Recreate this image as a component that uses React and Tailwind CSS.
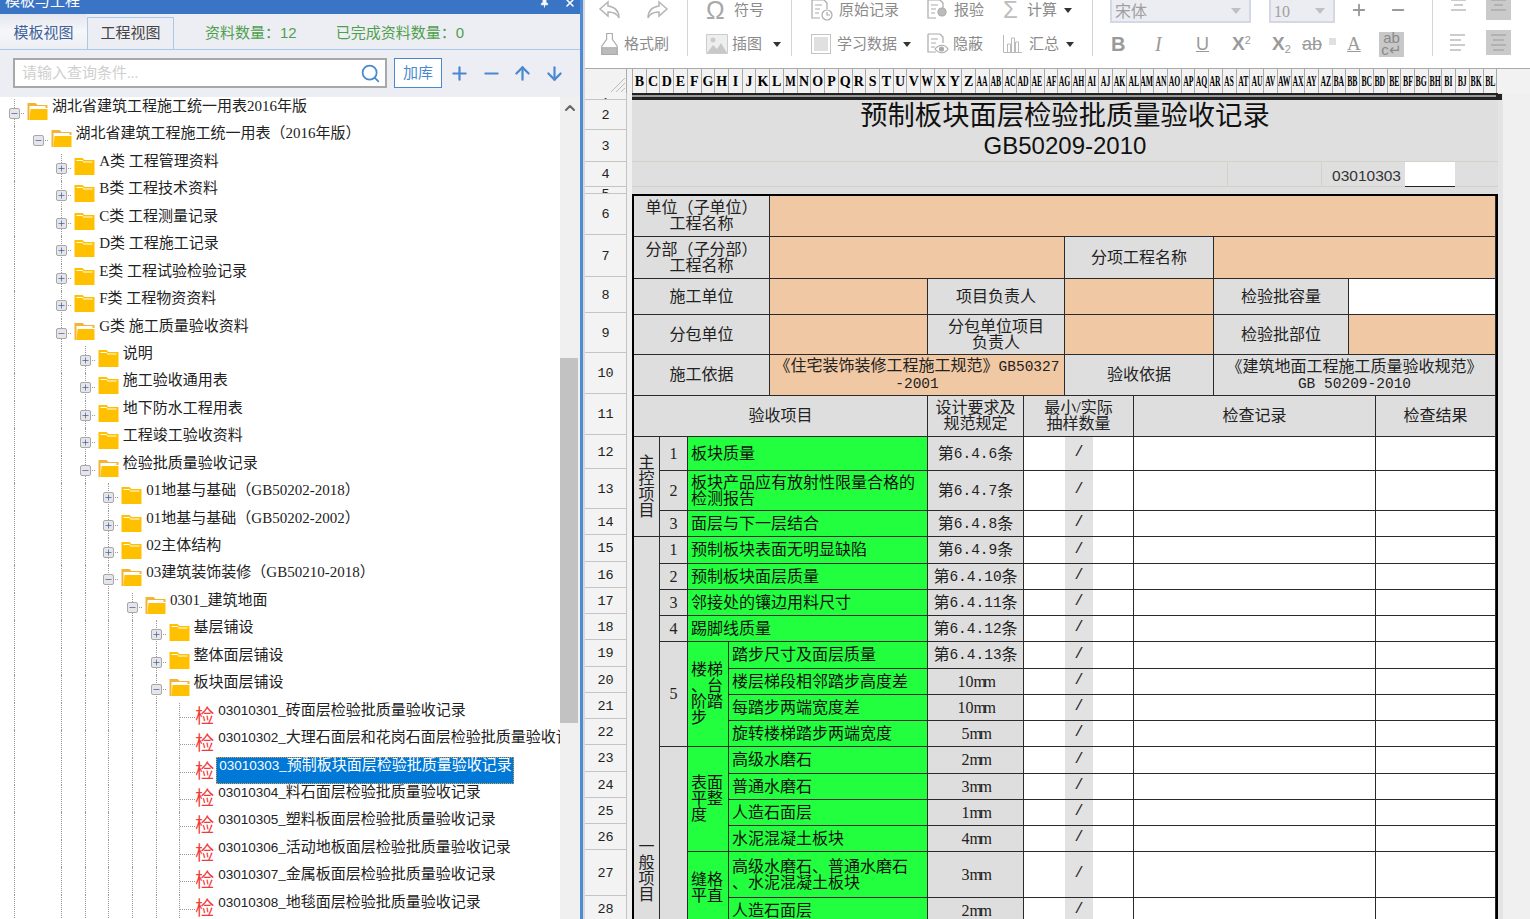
import { ArrowDown, ArrowUp, ChevronUp, Minus, Pin, Plus, Search, X } from "lucide-react";

const tree = [
  { level: 0, label: "湖北省建筑工程施工统一用表2016年版", open: true },
  { level: 1, label: "湖北省建筑工程施工统一用表（2016年版）", open: true },
  { level: 2, label: "A类 工程管理资料" },
  { level: 2, label: "B类 工程技术资料" },
  { level: 2, label: "C类 工程测量记录" },
  { level: 2, label: "D类 工程施工记录" },
  { level: 2, label: "E类 工程试验检验记录" },
  { level: 2, label: "F类 工程物资资料" },
  { level: 2, label: "G类 施工质量验收资料", open: true },
  { level: 3, label: "说明" },
  { level: 3, label: "施工验收通用表" },
  { level: 3, label: "地下防水工程用表" },
  { level: 3, label: "工程竣工验收资料" },
  { level: 3, label: "检验批质量验收记录", open: true },
  { level: 4, label: "01地基与基础（GB50202-2018）" },
  { level: 4, label: "01地基与基础（GB50202-2002）" },
  { level: 4, label: "02主体结构" },
  { level: 4, label: "03建筑装饰装修（GB50210-2018）", open: true },
  { level: 5, label: "0301_建筑地面", open: true },
  { level: 6, label: "基层铺设" },
  { level: 6, label: "整体面层铺设" },
  { level: 6, label: "板块面层铺设", open: true },
  { level: 7, leaf: true, code: "03010301", label: "_砖面层检验批质量验收记录" },
  { level: 7, leaf: true, code: "03010302", label: "_大理石面层和花岗石面层检验批质量验收记录" },
  { level: 7, leaf: true, code: "03010303", label: "_预制板块面层检验批质量验收记录", selected: true },
  { level: 7, leaf: true, code: "03010304", label: "_料石面层检验批质量验收记录" },
  { level: 7, leaf: true, code: "03010305", label: "_塑料板面层检验批质量验收记录" },
  { level: 7, leaf: true, code: "03010306", label: "_活动地板面层检验批质量验收记录" },
  { level: 7, leaf: true, code: "03010307", label: "_金属板面层检验批质量验收记录" },
  { level: 7, leaf: true, code: "03010308", label: "_地毯面层检验批质量验收记录" },
];

const singleCols = "BCDEFGHIJKLMNOPQRSTUVWXYZ".split("");
const doubleCols = [];
"ABCDEFGHIJKLMNOPQRSTUVWXYZ".split("").forEach((c) => doubleCols.push("A" + c));
"ABCDEFGHIJKL".split("").forEach((c) => doubleCols.push("B" + c));

function Folder({ open }) {
  if (open) {
    return (
      <svg width="21" height="18" viewBox="0 0 20 18" className="flex-none">
        <path fill="#f5b335" d="M0 1h8l2 2h10v3H2v12H0z" />
        <path fill="#fff" d="M2 4h16v2H2z" />
        <path fill="#ffc000" d="M3 7h17v11H2z" />
      </svg>
    );
  }
  return (
    <svg width="21" height="18" viewBox="0 0 20 18" className="flex-none">
      <path fill="#ffc000" d="M0 1h8l2 2h10v15H0z" />
      <path fill="#fff" d="M2 3h6l1 1.500h9v1H9L8 4H2z" />
    </svg>
  );
}

function Guide() {
  return (
    <span className="w-[23.6px] h-full flex-none pl-[14px]">
      <span className="block h-full border-l border-dotted border-[#9a9a9a]" />
    </span>
  );
}

function TreeRow({ row }) {
  const guides = [];
  for (let i = 0; i < row.level; i++) {
    if (i === 1) guides.push(<span key={i} className="w-[23.6px] flex-none" />);
    else guides.push(<Guide key={i} />);
  }

  if (row.leaf) {
    return (
      <div className="flex h-[27.45px] items-start whitespace-nowrap">
        {guides}
        <span className="relative w-[30px] h-full flex-none">
          <span className="absolute left-[14px] top-0 h-full border-l border-dotted border-[#9a9a9a]" />
          <span className="absolute left-[15px] top-[14px] w-[15px] border-t border-dotted border-[#9a9a9a]" />
        </span>
        <span className="w-[20px] flex-none mt-[3px] text-[19px] leading-[22px] text-[#f23a3a]">检</span>
        {row.selected ? (
          <span className="ml-[1px] pl-[2px] w-[298px] h-[27px] -mt-[1px] border border-dotted border-[#e8a030] bg-[#0078d7] text-white leading-[15px]">
            <span className="text-[13.500px] font-['Liberation_Sans']">{row.code}</span>
            {row.label}
          </span>
        ) : (
          <span className="ml-[3px] leading-[15px] text-[#222]">
            <span className="text-[13.500px] font-['Liberation_Sans']">{row.code}</span>
            {row.label}
          </span>
        )}
      </div>
    );
  }

  return (
    <div className="flex h-[27.45px] items-start whitespace-nowrap">
      {guides}
      <span className="relative w-[23.6px] h-full flex-none">
        {row.level !== 1 && (
          <span className="absolute left-[14px] top-0 h-full border-l border-dotted border-[#9a9a9a]" />
        )}
        <span className="absolute left-[15px] top-[14px] w-[9px] border-t border-dotted border-[#9a9a9a]" />
        <span className="absolute left-[9px] top-[9px] w-[11px] h-[11px] flex items-center justify-center rounded-[2px] border border-[#a8a8a8] bg-[#e6e6ea]">
          {row.open ? (
            <Minus size={9} strokeWidth={2} className="text-[#44609a]" />
          ) : (
            <Plus size={9} strokeWidth={2} className="text-[#44609a]" />
          )}
        </span>
      </span>
      <span className="ml-[3.4px] mt-[3px] flex-none">
        <Folder open={row.open} />
      </span>
      <span className="ml-[4px] leading-[15px] text-[#222]">{row.label}</span>
    </div>
  );
}

function LeftPanel() {
  return (
    <div className="w-[585px] h-full flex-none flex flex-col border-r-2 border-[#d8d8d8]">
      <div className="w-[583px] h-full flex flex-col border-r-[3px] border-[#4f8ad6] bg-[#edeef3]">
        <div className="h-[14px] flex-none flex items-start justify-between overflow-hidden bg-[#3a74c4] pl-[5px] pr-[4px] text-white">
          <span className="text-[15px] leading-[15px] -mt-[6px]">模板与工程</span>
          <span className="flex items-start gap-[14px] -mt-[3px]">
            <Pin size={11} fill="white" />
            <X size={12} strokeWidth={3} />
          </span>
        </div>

        <div className="h-[36px] flex-none flex items-stretch border-b border-[#a9c8ea]">
          <div className="w-[87px] pt-[3px] flex items-center justify-center bg-gradient-to-b from-[#e4e6ee] via-[#f6f7fa] to-[#edeef3] text-[15px] text-[#3f6299]">
            模板视图
          </div>
          <div className="w-[87px] mt-[3px] flex items-center justify-center border-x border-t border-[#a9c8ea] text-[15px] text-[#444]">
            工程视图
          </div>
          <div className="ml-[31px] pt-[4px] flex items-center text-[15px] text-[#4f9f4f]">
            资料数量：<span className="font-['Liberation_Sans']">12</span>
          </div>
          <div className="ml-[39px] pt-[4px] flex items-center text-[15px] text-[#4f9f4f]">
            已完成资料数量：<span className="font-['Liberation_Sans']">0</span>
          </div>
        </div>

        <div className="h-[47px] flex-none flex items-center pl-[13px] pb-[1px]">
          <div className="w-[374px] h-[30px] flex items-center justify-between border-2 border-[#a8a8a8] bg-white pl-[7px] pr-[4px]">
            <span className="text-[15px] text-[#cfcfcf]">请输入查询条件...</span>
            <Search size={21} strokeWidth={2} className="text-[#4a88d0]" />
          </div>
          <div className="ml-[7px] w-[48px] h-[30px] flex items-center justify-center border border-[#4a88d0] bg-white text-[15px] text-[#4a88d0]">
            加库
          </div>
          <div className="ml-[7px] flex items-center gap-[10.6px] text-[#4a88d0]">
            <Plus size={21} strokeWidth={2.500} />
            <Minus size={21} strokeWidth={2.500} />
            <ArrowUp size={21} strokeWidth={2.500} />
            <ArrowDown size={21} strokeWidth={2.500} />
          </div>
        </div>

        <div className="flex-1 min-h-0 flex">
          <div className="w-[560px] pt-[2px] overflow-hidden bg-white text-[15px]">
            {tree.map((row, i) => (
              <TreeRow key={i} row={row} />
            ))}
          </div>
          <div className="flex-1 bg-[#f0f0f0]">
            <div className="h-[22px] flex items-center justify-center">
              <ChevronUp size={16} strokeWidth={3} className="text-[#666]" />
            </div>
            <div className="mt-[239px] w-[18px] h-[365px] bg-[#c2c2c2]" />
          </div>
        </div>
      </div>
    </div>
  );
}

function Caret() {
  return (
    <svg width="8" height="5" viewBox="0 0 8 5" className="flex-none">
      <path d="M0 0h8L4 5z" fill="#333" />
    </svg>
  );
}

function Arrow({ flip }) {
  return (
    <svg width="24" height="20" viewBox="0 0 24 20" fill="none" stroke="#b5b5b5" strokeWidth="1.500" className={flip ? "-scale-x-100 flex-none" : "flex-none"}>
      <path d="M10 2L2 9l8 7v-4c5 0 9 1 11 6 0-8-4-11-11-12z" />
    </svg>
  );
}

function DocIcon({ badge }) {
  return (
    <svg width="22" height="22" viewBox="0 0 22 22" fill="none" stroke="#aaa" strokeWidth="1.200" className="flex-none">
      <path d="M1 1h12l3 3v6M1 1v18h8" />
      <path d="M4 6h7M4 10h5M4 14h4" />
      {badge === "clock" && (
        <g>
          <circle cx="16" cy="16" r="5" />
          <path d="M16 13v3h3" />
        </g>
      )}
      {badge === "gear" && <circle cx="15" cy="13" r="4" fill="#bbb" />}
      {badge === "eye" && (
        <g>
          <path d="M8 16c4-5 10-5 13 0-3 5-9 5-13 0z" />
          <circle cx="14.500" cy="16" r="2" fill="#aaa" />
        </g>
      )}
    </svg>
  );
}

function ToolLabel({ children }) {
  return <span className="text-[15px] leading-[15px] whitespace-nowrap text-[#8b8b8b]">{children}</span>;
}

function Lines({ align, on }) {
  const d =
    align === "left"
      ? "M1 1h15M1 6h11M1 11h15M1 16h11"
      : align === "top"
        ? "M2 1h15M5 6h9M2 11h15"
        : "M2 1h15M4 6h11M2 11h15M4 16h11";
  return (
    <span className={on ? "w-[25px] h-[25px] flex-none flex items-center justify-center bg-[#cacaca]" : "w-[25px] h-[25px] flex-none flex items-center justify-center"}>
      <svg width="19" height="17" viewBox="0 0 19 17" stroke="#999" strokeWidth="1.200">
        <path d={d} />
      </svg>
    </span>
  );
}

function SelectBox({ className, children }) {
  return (
    <div className={"h-[23px] self-start flex items-center justify-between border-2 border-t-0 border-[#d5d7e6] bg-[#ecedf2] pl-[3px] pr-[8px] text-[16px] text-[#a0a0a0] " + className}>
      <span className="pt-[3px]">{children}</span>
      <svg width="10" height="6" viewBox="0 0 10 6">
        <path d="M0 0h10L5 6z" fill="#c0c0c0" />
      </svg>
    </div>
  );
}

function Toolbar() {
  return (
    <div className="h-[69px] flex-none flex overflow-hidden border-b border-[#aaa] bg-white pl-[13px]">
      <div className="w-[89px] flex-none flex flex-col">
        <div className="h-[20px] flex-none flex items-center gap-[23px] text-[#aaa]">
          <Arrow />
          <Arrow flip />
        </div>
        <div className="h-[48px] flex-none flex items-center gap-[5px] pl-[2px]">
          <svg width="19" height="24" viewBox="0 0 20 24" fill="none" stroke="#aaa" strokeWidth="1.200" className="flex-none">
            <path d="M7 1h6v6l5 7v9H2v-9l5-7z" />
            <path d="M2 16h16v7H2z" fill="#bbb" />
          </svg>
          <ToolLabel>格式刷</ToolLabel>
        </div>
      </div>

      <div className="w-[104px] h-[56px] flex-none flex flex-col border-l border-[#d5d5d5] pl-[18px]">
        <div className="h-[20px] flex-none flex items-center gap-[6px]">
          <span className="w-[22px] text-[25px] leading-[24px] text-[#a8a8a8] font-['Liberation_Sans']">Ω</span>
          <ToolLabel>符号</ToolLabel>
        </div>
        <div className="h-[48px] flex-none flex items-center gap-[4px]">
          <svg width="22" height="20" viewBox="0 0 22 20" className="flex-none">
            <path fill="#eee" stroke="#ccc" d="M.5.500h21v19H.5z" />
            <circle cx="7" cy="6" r="2.500" fill="#ccc" />
            <path fill="#c8c8c8" d="M1 19l6-8 4 4 4-6 6 10z" />
          </svg>
          <ToolLabel>插图</ToolLabel>
          <span className="ml-[7px]">
            <Caret />
          </span>
        </div>
      </div>

      <div className="w-[301px] h-[56px] flex-none grid grid-cols-[116px_76px_1fr] grid-rows-[20px_48px] border-l border-[#d5d5d5] pl-[19px]">
        <div className="flex items-center gap-[6px]">
          <DocIcon badge="clock" />
          <ToolLabel>原始记录</ToolLabel>
        </div>
        <div className="flex items-center gap-[5px]">
          <DocIcon badge="gear" />
          <ToolLabel>报验</ToolLabel>
        </div>
        <div className="flex items-center">
          <span className="w-[24px] text-[24px] leading-[20px] text-[#bdbdbd] font-['Liberation_Sans']">Σ</span>
          <ToolLabel>计算</ToolLabel>
          <span className="ml-[7px]">
            <Caret />
          </span>
        </div>
        <div className="flex items-center gap-[6px]">
          <span className="w-[20px] h-[20px] flex-none flex items-center justify-center border border-[#c4c4c4]">
            <span className="w-[14px] h-[14px] bg-[#e0e0e0]" />
          </span>
          <ToolLabel>学习数据</ToolLabel>
          <span className="ml-0">
            <Caret />
          </span>
        </div>
        <div className="flex items-center gap-[4px]">
          <DocIcon badge="eye" />
          <ToolLabel>隐蔽</ToolLabel>
        </div>
        <div className="flex items-center gap-[7px]">
          <svg width="19" height="18" viewBox="0 0 19 18" fill="none" stroke="#bbb" className="flex-none">
            <path d="M.5 0v17.500H19M4.500 17V9h3v8M8.500 17V3h3v14M12.500 17V7h3v10" />
          </svg>
          <ToolLabel>汇总</ToolLabel>
          <span className="ml-0">
            <Caret />
          </span>
        </div>
      </div>

      <div className="w-[340px] h-[56px] flex-none flex flex-col border-l border-[#d5d5d5] pl-[17px]">
        <div className="h-[20px] flex-none flex items-center">
          <SelectBox className="w-[141px]">宋体</SelectBox>
          <SelectBox className="ml-[18px] w-[66px]">10</SelectBox>
          <Plus size={18} strokeWidth={2.500} className="ml-[15px] text-[#9a9a9a]" />
          <Minus size={18} strokeWidth={2.500} className="ml-[21px] text-[#9a9a9a]" />
        </div>
        <div className="h-[48px] flex-none flex items-center text-[#9a9a9a] font-['Liberation_Sans']">
          <span className="w-[40px] pl-[1px] text-[20px] font-bold">B</span>
          <span className="w-[42px] pl-[5px] text-[20px] italic font-['Liberation_Serif']">I</span>
          <span className="w-[40px] pl-[4px] text-[18px] underline">U</span>
          <span className="w-[40px] text-[19px] font-bold">
            X<sup className="text-[11px] font-normal">2</sup>
          </span>
          <span className="w-[30px] text-[19px] font-bold">
            X<sub className="text-[11px] font-normal">2</sub>
          </span>
          <span className="w-[27px] text-[18px] line-through">ab</span>
          <span className="w-[7px] h-[7px] mb-[6px] flex-none bg-[#e0e0e0]" />
          <span className="ml-[11px] w-[32px] text-[19px] underline font-['Liberation_Serif']">A</span>
          <span className="w-[25px] h-[25px] flex-none overflow-hidden bg-[#c8c8c8] text-[15px] leading-[12px] text-center text-[#8a8a8a]">
            ab
            <br />
            c↵
          </span>
        </div>
      </div>

      <div className="flex-1 h-[56px] flex flex-col border-l border-[#d5d5d5] pl-[13px]">
        <div className="h-[20px] flex-none flex items-center gap-[15px] -mt-[3px]">
          <Lines align="top" />
          <Lines align="top" on />
          <Lines align="top" />
        </div>
        <div className="h-[48px] flex-none flex items-center gap-[15px] pt-[3px]">
          <Lines align="left" />
          <Lines align="center" on />
          <Lines align="left" />
        </div>
      </div>
    </div>
  );
}

function ColumnHeader() {
  return (
    <div className="h-[24px] flex-none flex bg-[#f2f2f2]">
      <div className="w-[42px] flex-none flex items-end justify-end border-r border-[#aaa] pr-[1px] pb-[1px]">
        <svg width="14" height="14" viewBox="0 0 14 14" stroke="#bbb" fill="none">
          <path d="M0 14L14 0M5 14l9-9M10 14l4-4" />
        </svg>
      </div>
      <div className="w-[6px] flex-none border-r border-[#aaa]" />
      <div className="w-[864px] flex-none flex font-['Liberation_Serif'] font-bold text-[14px] text-black">
        {singleCols.map((c) => (
          <div key={c} className="flex-1 min-w-0 flex items-center justify-center overflow-hidden border-r border-[#aaa]">
            <span className={c === "M" || c === "W" ? "scale-x-[.8]" : ""}>{c}</span>
          </div>
        ))}
        {doubleCols.map((c) => (
          <div key={c} className="flex-1 min-w-0 flex items-center justify-center overflow-hidden border-r border-[#aaa]">
            <span className="whitespace-nowrap scale-x-[.55]">{c}</span>
          </div>
        ))}
      </div>
    </div>
  );
}

const rowLabels = [".", 2, 3, 4, 5, 6, 7, 8, 9, 10, 11, 12, 13, 14, 15, 16, 17, 18, 19, 20, 21, 22, 23, 24, 25, 26, 27, 28];

function RowHeader() {
  return (
    <div className="w-[42px] flex-none grid grid-rows-[7px_30px_32px_25px_7px_41px_42px_36px_40px_41px_41px_34px_40px_26px_27px_26px_26px_26px_27px_26px_26px_26px_27px_26px_26px_26px_46px_26px] bg-[#f3f3f3] font-['Liberation_Mono'] text-[13.500px] text-[#222]">
      {rowLabels.map((label, i) => (
        <div
          key={i}
          className={
            i === 4
              ? "flex items-start justify-center overflow-hidden border-r border-b border-[#c4c4c4] leading-none pt-[1px]"
              : "flex items-center justify-center overflow-hidden border-r border-b border-[#c4c4c4] leading-none pt-[2px]"
          }
        >
          {label}
        </div>
      ))}
    </div>
  );
}

function Cell({ className, children }) {
  return (
    <div className={"flex items-center justify-center overflow-hidden border-r border-b border-[#2a2a2a] text-center leading-4 whitespace-nowrap " + className}>
      {children}
    </div>
  );
}

function Mono({ children }) {
  return <span className="font-['Liberation_Mono'] text-[14.500px]">{children}</span>;
}

function Mm({ n }) {
  return (
    <span className="font-['Liberation_Serif'] text-[16px]">
      {n}
      <span className="tracking-[-2.500px]">mm</span>
    </span>
  );
}

// G/H/I 三格 + 检查记录 + 检查结果
function RowTail() {
  return (
    <>
      <div className="border-b border-[#2a2a2a] bg-white" />
      <div className="flex items-center justify-center border-b border-[#2a2a2a] bg-[#e2e2e2] font-['Liberation_Mono'] text-[15px]">/</div>
      <Cell className="bg-white" />
      <Cell className="col-span-3 bg-white" />
      <Cell className="bg-white" />
    </>
  );
}

function Green({ className, children }) {
  return <Cell className={"justify-start pl-[3px] text-left bg-[#22ff3f] text-[#111] " + className}>{children}</Cell>;
}

function Grey({ className, children }) {
  return <Cell className={"bg-[#dedede] " + className}>{children}</Cell>;
}

function Orange({ className, children }) {
  return <Cell className={"bg-[#f0c8a4] " + className}>{children}</Cell>;
}

function Rule({ n }) {
  return (
    <Grey>
      第<Mono>{n}</Mono>条
    </Grey>
  );
}

const mainRows = [
  { no: "1", item: "板块质量", n: "6.4.6" },
  { no: "2", item: "板块产品应有放射性限量合格的", item2: "检测报告", n: "6.4.7" },
  { no: "3", item: "面层与下一层结合", n: "6.4.8" },
];

const generalRows = [
  { no: "1", item: "预制板块表面无明显缺陷", n: "6.4.9" },
  { no: "2", item: "预制板块面层质量", n: "6.4.10" },
  { no: "3", item: "邻接处的镶边用料尺寸", n: "6.4.11" },
  { no: "4", item: "踢脚线质量", n: "6.4.12" },
];

function SheetTable() {
  return (
    <div className="w-[866px] flex-none grid grid-cols-[26px_28px_41px_41px_158px_96px_41px_28px_41px_80px_135px_27px_120px] grid-rows-[41px_42px_36px_40px_41px_41px_34px_40px_26px_27px_26px_26px_26px_27px_26px_26px_26px_27px_26px_26px_26px_46px_26px] border-2 border-b-0 border-black text-[16px] text-[#222]">
      <Grey className="col-span-4">
        <div>
          单位（子单位）
          <br />
          工程名称
        </div>
      </Grey>
      <Orange className="col-span-9" />

      <Grey className="col-span-4">
        <div>
          分部（子分部）
          <br />
          工程名称
        </div>
      </Grey>
      <Orange className="col-span-3" />
      <Grey className="col-span-3">分项工程名称</Grey>
      <Orange className="col-span-3" />

      <Grey className="col-span-4">施工单位</Grey>
      <Orange />
      <Grey className="col-span-2">项目负责人</Grey>
      <Orange className="col-span-3" />
      <Grey>检验批容量</Grey>
      <Cell className="col-span-2 bg-white" />

      <Grey className="col-span-4">分包单位</Grey>
      <Orange />
      <Grey className="col-span-2">
        <div>
          分包单位项目
          <br />
          负责人
        </div>
      </Grey>
      <Orange className="col-span-3" />
      <Grey>检验批部位</Grey>
      <Orange className="col-span-2" />

      <Grey className="col-span-4">施工依据</Grey>
      <Orange className="col-span-3">
        <div>
          《住宅装饰装修工程施工规范》<Mono>GB50327</Mono>
          <br />
          <Mono>-2001</Mono>
        </div>
      </Orange>
      <Grey className="col-span-3">验收依据</Grey>
      <Grey className="col-span-3">
        <div>
          《建筑地面工程施工质量验收规范》
          <br />
          <Mono>GB 50209-2010</Mono>
        </div>
      </Grey>

      <Grey className="col-span-5">验收项目</Grey>
      <Grey>
        <div>
          设计要求及
          <br />
          规范规定
        </div>
      </Grey>
      <Grey className="col-span-3">
        <div>
          最小/实际
          <br />
          抽样数量
        </div>
      </Grey>
      <Grey className="col-span-3">检查记录</Grey>
      <Grey>检查结果</Grey>

      {mainRows.map((r, i) => (
        <div key={r.no} className="contents">
          {i === 0 && (
            <Grey className="row-span-3">
              <div>
                主<br />控<br />项<br />目
              </div>
            </Grey>
          )}
          <Grey>{r.no}</Grey>
          <Green className="col-span-3">
            <div>
              {r.item}
              {r.item2 && <br />}
              {r.item2}
            </div>
          </Green>
          <Rule n={r.n} />
          <RowTail />
        </div>
      ))}

      {generalRows.map((r, i) => (
        <div key={r.no} className="contents">
          {i === 0 && (
            <Grey className="row-span-14 items-end pb-[20px]">
              <div>
                一<br />般<br />项<br />目
              </div>
            </Grey>
          )}
          <Grey>{r.no}</Grey>
          <Green className="col-span-3">{r.item}</Green>
          <Rule n={r.n} />
          <RowTail />
        </div>
      ))}

      <Grey className="row-span-4">5</Grey>
      <Green className="row-span-4">
        <div>
          楼梯
          <br />
          、台
          <br />
          阶踏
          <br />
          步
        </div>
      </Green>
      <Green className="col-span-2">踏步尺寸及面层质量</Green>
      <Rule n="6.4.13" />
      <RowTail />
      <Green className="col-span-2">楼层梯段相邻踏步高度差</Green>
      <Grey><Mm n="10" /></Grey>
      <RowTail />
      <Green className="col-span-2">每踏步两端宽度差</Green>
      <Grey><Mm n="10" /></Grey>
      <RowTail />
      <Green className="col-span-2">旋转楼梯踏步两端宽度</Green>
      <Grey><Mm n="5" /></Grey>
      <RowTail />

      <Grey className="row-span-6" />
      <Green className="row-span-4">
        <div>
          表面
          <br />
          平整
          <br />
          度
        </div>
      </Green>
      <Green className="col-span-2">高级水磨石</Green>
      <Grey><Mm n="2" /></Grey>
      <RowTail />
      <Green className="col-span-2">普通水磨石</Green>
      <Grey><Mm n="3" /></Grey>
      <RowTail />
      <Green className="col-span-2">人造石面层</Green>
      <Grey><Mm n="1" /></Grey>
      <RowTail />
      <Green className="col-span-2">水泥混凝土板块</Green>
      <Grey><Mm n="4" /></Grey>
      <RowTail />

      <Green className="row-span-2">
        <div>
          缝格
          <br />
          平直
        </div>
      </Green>
      <Green className="col-span-2">
        <div>
          高级水磨石、普通水磨石
          <br />
          、水泥混凝土板块
        </div>
      </Green>
      <Grey><Mm n="3" /></Grey>
      <RowTail />
      <Green className="col-span-2">人造石面层</Green>
      <Grey><Mm n="2" /></Grey>
      <RowTail />
    </div>
  );
}

function SheetTitle() {
  return (
    <div className="w-[866px] flex-none flex flex-col bg-[#dfdfdf]">
      <div className="relative h-[7px] flex-none border-t-2 border-b-[3px] border-[#222] bg-[#999]">
        <span className="absolute -right-[4px] -top-[1px] w-[6px] h-[6px] bg-[#222]" />
      </div>
      <div className="h-[30px] flex-none flex items-center justify-center pt-[4px] text-[27.300px] leading-none text-[#111]">
        预制板块面层检验批质量验收记录
      </div>
      <div className="h-[32px] flex-none flex items-center justify-center border-b border-[#d2d2c8] font-['Liberation_Sans'] text-[24px] leading-none text-[#111]">
        GB50209-2010
      </div>
      <div className="h-[25px] flex-none flex border-b border-[#d2d2c8] font-['Liberation_Sans'] text-[15.500px] text-[#333]">
        <div className="w-[596px] flex-none border-r border-[#d2d2c8]" />
        <div className="w-[94px] flex-none border-r border-[#d2d2c8]" />
        <div className="flex-1 flex items-center justify-end pr-[43px]">
          <span className="mr-[4px] pt-[3px]">03010303</span>
          <span className="w-[50px] h-[25px] border-b border-[#222] bg-white" />
        </div>
      </div>
      <div className="h-[7px] flex-none" />
    </div>
  );
}

export default function App() {
  return (
    <div className="w-[1530px] h-[919px] flex overflow-hidden bg-[#f0f0f0] font-['Liberation_Serif','Noto_Sans_CJK_SC',serif]">
      <LeftPanel />
      <div className="flex-1 min-w-0 flex flex-col">
        <Toolbar />
        <ColumnHeader />
        <div className="flex-1 min-h-0 flex items-start overflow-hidden">
          <RowHeader />
          <div className="w-[5px] flex-none" />
          <div className="flex-none flex flex-col">
            <SheetTitle />
            <SheetTable />
          </div>
          <div className="w-[5px] h-full flex-none bg-[#e4e4e4]" />
        </div>
      </div>
    </div>
  );
}
